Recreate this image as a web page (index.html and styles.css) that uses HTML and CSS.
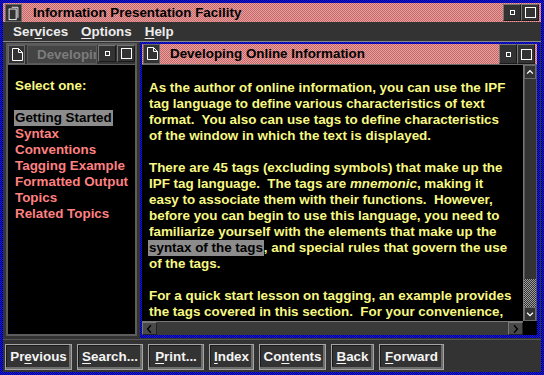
FILE: index.html
```html
<!DOCTYPE html>
<html>
<head>
<meta charset="utf-8">
<link rel="stylesheet" href="styles.css">
</head>
<body>
<div class="frame">
  <div class="win">
    <div class="titlebar pink">
      <div class="sysicon">
        <svg width="17" height="18" viewBox="0 0 17 18"><path d="M6.5 2.5H13.5V14.5" fill="none" stroke="#fff"/><rect x="3.5" y="4.5" width="8" height="12" fill="none" stroke="#fff"/></svg>
      </div>
      <div class="title">Information Presentation Facility</div>
      <div class="tbtn"><span class="minbox"></span></div>
      <div class="tbtn"><span class="maxbox"></span></div>
    </div>
    <div class="menubar">
      <span class="menu">Ser<u>v</u>ices</span>
      <span class="menu"><u>O</u>ptions</span>
      <span class="menu"><u>H</u>elp</span>
    </div>
    <div class="client">
      <div class="pane-left">
        <div class="ptitle">
          <div class="docicon"><svg width="17" height="17" viewBox="0 0 17 17"><path d="M3.5 2.5H9.5L13.5 6.5V14.5H3.5Z M9.5 2.5V6.5H13.5" fill="none" stroke="#fff"/></svg></div>
          <div class="ltitle">Developing Online Information</div>
          <div class="tbtn"><span class="minbox"></span></div>
          <div class="tbtn"><span class="maxbox"></span></div>
        </div>
        <div class="lbody">
          <div class="yl">Select one:</div>
          <div class="blank"></div>
          <div><span class="hl">Getting Started</span></div>
          <div class="link">Syntax</div>
          <div class="link">Conventions</div>
          <div class="link">Tagging Example</div>
          <div class="link">Formatted Output</div>
          <div class="link">Topics</div>
          <div class="link">Related Topics</div>
        </div>
      </div>
      <div class="pane-main">
        <div class="ptitle pink">
          <div class="docicon"><svg width="17" height="17" viewBox="0 0 17 17"><path d="M3.5 2.5H9.5L13.5 6.5V14.5H3.5Z M9.5 2.5V6.5H13.5" fill="none" stroke="#fff"/></svg></div>
          <div class="mtitle">Developing Online Information</div>
          <div class="tbtn"><span class="minbox"></span></div>
          <div class="tbtn"><span class="maxbox"></span></div>
        </div>
        <div class="mbody">
          <div class="mrow">
            <div class="text">
              <div class="ln">As the author of online information, you can use the IPF</div>
              <div class="ln">tag language to define various characteristics of text</div>
              <div class="ln">format.  You also can use tags to define characteristics</div>
              <div class="ln">of the window in which the text is displayed.</div>
              <div class="blank"></div>
              <div class="ln">There are 45 tags (excluding symbols) that make up the</div>
              <div class="ln">IPF tag language.  The tags are <i>mnemonic</i>, making it</div>
              <div class="ln">easy to associate them with their functions.  However,</div>
              <div class="ln">before you can begin to use this language, you need to</div>
              <div class="ln">familiarize yourself with the elements that make up the</div>
              <div class="ln"><span class="hl">syntax of the tags</span>, and special rules that govern the use</div>
              <div class="ln">of the tags.</div>
              <div class="blank"></div>
              <div class="ln">For a quick start lesson on tagging, an example provides</div>
              <div class="ln">the tags covered in this section.  For your convenience,</div>
            </div>
            <div class="vscroll">
              <div class="sarrow"><svg width="12" height="12" viewBox="0 0 12 12"><path d="M2.5 8L6 4.5L9.5 8" fill="none" stroke="#fff" stroke-width="1.5"/></svg></div>
              <div class="track"></div>
              <div class="thumb"></div>
              <div class="sarrow"><svg width="12" height="12" viewBox="0 0 12 12"><path d="M2.5 4.5L6 8L9.5 4.5" fill="none" stroke="#fff" stroke-width="1.5"/></svg></div>
            </div>
          </div>
          <div class="hrow">
            <div class="hscroll">
              <div class="harrow"><svg width="14" height="12" viewBox="0 0 14 12"><path d="M8.5 2L5 6L8.5 10" fill="none" stroke="#000" stroke-width="1.5"/></svg></div>
              <div class="htrack"></div>
              <div class="harrow"><svg width="14" height="12" viewBox="0 0 14 12"><path d="M5.5 2L9 6L5.5 10" fill="none" stroke="#000" stroke-width="1.5"/></svg></div>
            </div>
            <div class="corner"></div>
          </div>
        </div>
      </div>
    </div>
    <div class="buttonbar">
      <div class="btn w-prev">Pr<u>e</u>vious</div>
      <div class="btn w-search"><u>S</u>earch...</div>
      <div class="btn w-print"><u>P</u>rint...</div>
      <div class="btn w-index"><u>I</u>ndex</div>
      <div class="btn w-contents">Co<u>n</u>tents</div>
      <div class="btn w-back"><u>B</u>ack</div>
      <div class="btn w-forward"><u>F</u>orward</div>
    </div>
  </div>
</div>
</body>
</html>
```

FILE: styles.css
```css
* { box-sizing: border-box; }
html, body { margin: 0; padding: 0; background: #000; }
body {
  font-family: "Liberation Sans", Arial, sans-serif;
  font-weight: bold;
  font-size: 13.4px;
  line-height: 16px;
}
.frame {
  width: 544px;
  height: 375px;
  padding: 3px;
  overflow: hidden;
  background: repeating-conic-gradient(#1414ff 0 25%, #00006a 0 50%) 0 0 / 2px 2px;
}
.win {
  width: 538px;
  height: 369px;
  background: #333;
  display: flex;
  flex-direction: column;
  overflow: hidden;
}
.pink {
  background: repeating-conic-gradient(#f49a9a 0 25%, #b86c6c 0 50%) 0 0 / 2px 2px;
}
.titlebar {
  height: 19px;
  display: flex;
  align-items: center;
  padding: 0 2px;
  flex: none;
}
.sysicon {
  width: 17px;
  height: 18px;
  background: #333;
  border: 1px solid #6a6a6a;
  display: flex;
  align-items: center;
  justify-content: center;
}
.sysicon svg { display: block; }
.title {
  flex: 1;
  margin-left: 11px;
  color: #000;
  line-height: 19px;
  white-space: nowrap;
}
.tbtn {
  width: 18px;
  height: 17px;
  background: #333;
  border: 1px solid #777;
  border-right-color: #1a1a1a;
  border-bottom-color: #1a1a1a;
  display: flex;
  align-items: center;
  justify-content: center;
  flex: none;
}
.minbox {
  width: 5px;
  height: 5px;
  border: 1px solid #fff;
}
.maxbox {
  width: 11px;
  height: 11px;
  border: 1px solid #fff;
}
.menubar {
  height: 20px;
  border-bottom: 1px solid #8a8a8a;
  display: flex;
  gap: 13px;
  padding-left: 10px;
  color: #ececec;
  line-height: 19px;
  flex: none;
  background: #333;
}
.menu u, .btn u { text-decoration-thickness: 1px; text-underline-offset: 2px; }
.client {
  height: 297px;
  display: flex;
  flex: none;
  overflow: hidden;
}
.pane-left {
  margin: 1px 0 0 3px;
  width: 131px;
  height: 293px;
  border: 2px solid #5c5c5c;
  background: #000;
  display: flex;
  flex-direction: column;
  overflow: hidden;
}
.ptitle {
  height: 19px;
  display: flex;
  align-items: stretch;
  flex: none;
}
.pane-left .ptitle {
  background: #333;
  gap: 1px;
  border-bottom: 1px solid #5c5c5c;
  height: 20px;
}
.docicon {
  width: 17px;
  background: #333;
  border: 1px solid #6a6a6a;
  flex: none;
}
.docicon svg { display: block; margin: 0 auto; }
.ltitle {
  width: 71px;
  margin-left: 1px;
  overflow: hidden;
  white-space: nowrap;
  color: #7c7c7c;
  background: #444;
  border: 1px solid #5a5a5a;
  padding-left: 9px;
  line-height: 17px;
}
.lbody {
  flex: 1;
  padding: 13px 0 0 7px;
  white-space: nowrap;
}
.yl { color: #f8f884; }
.link { color: #ff8080; }
.blank { height: 16px; }
.hl {
  display: inline-block;
  background: #8c8c8c;
  color: #000;
  padding: 0 1px;
  margin-left: -1px;
  line-height: 16px;
}
.pane-main {
  margin-left: 3px;
  width: 400px;
  height: 296px;
  padding: 2px 3px 3px 2px;
  background: repeating-conic-gradient(#1414ff 0 25%, #00006a 0 50%) 0 0 / 2px 2px;
  display: flex;
  flex-direction: column;
  overflow: hidden;
}
.pane-main .ptitle { height: 20px; }
.pane-main .ptitle .docicon { margin-left: 1px; }
.pane-main .ptitle .tbtn { height: 20px; }
.pane-main .ptitle .tbtn:last-child { margin-right: 2px; }
.mtitle {
  flex: 1;
  margin-left: 10px;
  color: #000;
  line-height: 20px;
  white-space: nowrap;
}
.mbody {
  flex: 1;
  min-height: 0;
  display: flex;
  flex-direction: column;
  background: #000;
  border-top: 1px solid #6a6a6a;
}
.mrow {
  flex: 1;
  display: flex;
  min-height: 0;
}
.text {
  flex: 1;
  min-height: 0;
  color: #f8f884;
  padding: 15px 0 0 7px;
  overflow: hidden;
}
.ln {
  height: 16px;
  white-space: pre;
}
.text i { font-style: italic; }
.vscroll {
  width: 14px;
  display: flex;
  flex-direction: column;
  background: #333;
  border-left: 1px solid #777;
  border-right: 1px solid #555;
}
.sarrow {
  height: 14px;
  background: #333;
  border: 1px solid #6a6a6a;
  display: flex;
  align-items: center;
  justify-content: center;
  flex: none;
}
.track {
  flex: 1;
  background: #333;
  border-left: 1px solid #555;
}
.thumb {
  height: 28px;
  flex: none;
  background: repeating-conic-gradient(#a0a0a0 0 25%, #303030 0 50%) 0 0 / 2px 2px;
}
.hrow {
  height: 14px;
  display: flex;
  flex: none;
}
.hscroll {
  width: 381px;
  display: flex;
  background: #3a3a3a;
  border-top: 1px solid #777;
}
.harrow {
  width: 15px;
  background: #4a4a4a;
  border: 1px solid #777;
  border-right-color: #222;
  border-bottom-color: #222;
  display: flex;
  align-items: center;
  justify-content: center;
  flex: none;
}
.htrack { flex: 1; }
.corner { flex: 1; background: #000; }
.buttonbar {
  flex: 1;
  display: flex;
  gap: 5px;
  padding: 4px 0 0 2px;
  border-top: 1px solid #555;
}
.btn {
  height: 26px;
  background: #333;
  color: #f4f4f4;
  border: 1px solid #a4a4a4;
  box-shadow: inset -2px -2px 0 #6e6e6e, inset 1px 1px 0 #1c1c1c;
  display: flex;
  align-items: center;
  justify-content: center;
  white-space: nowrap;
  padding-bottom: 1px;
}
.w-prev { width: 67px; }
.w-search { width: 66px; }
.w-print { width: 56px; }
.w-index { width: 45px; }
.w-contents { width: 67px; }
.w-back { width: 43px; }
.w-forward { width: 65px; }
```
